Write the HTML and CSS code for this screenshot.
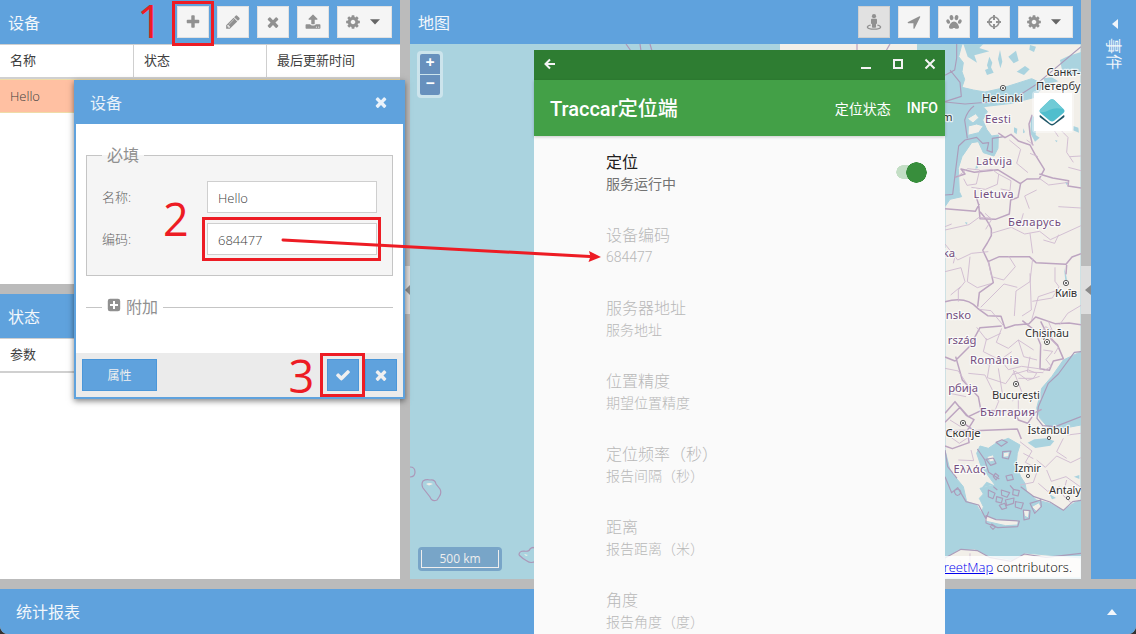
FILE: index.html
```
<!DOCTYPE html>
<html lang="zh-CN">
<head>
<meta charset="utf-8">
<title>Traccar</title>
<link rel="stylesheet" href="styles.css">
</head>
<body>
<svg class="defs" width="0" height="0">
  <symbol id="plus" viewBox="0 0 1792 1792"><path d="M1600 736v192q0 40-28 68t-68 28h-416v416q0 40-28 68t-68 28h-192q-40 0-68-28t-28-68v-416h-416q-40 0-68-28t-28-68v-192q0-40 28-68t68-28h416v-416q0-40 28-68t68-28h192q40 0 68 28t28 68v416h416q40 0 68 28t28 68z"/></symbol>
  <symbol id="times" viewBox="0 0 1792 1792"><path d="M1490 1322q0 40-28 68l-136 136q-28 28-68 28t-68-28l-294-294-294 294q-28 28-68 28t-68-28l-136-136q-28-28-28-68t28-68l294-294-294-294q-28-28-28-68t28-68l136-136q28-28 68-28t68 28l294 294 294-294q28-28 68-28t68 28l136 136q28 28 28 68t-28 68l-294 294 294 294q28 28 28 68z"/></symbol>
  <symbol id="pencil" viewBox="0 0 1792 1792"><path d="M491 1536l91-91-235-235-91 91v107h128v128h107zm523-928q0-22-22-22-10 0-17 7l-542 542q-7 7-7 17 0 22 22 22 10 0 17-7l542-542q7-7 7-17zm-54-192l416 416-832 832h-416v-416zm683 96q0 53-37 90l-166 166-416-416 166-165q36-38 90-38 53 0 91 38l235 234q37 39 37 91z"/></symbol>
  <symbol id="upload" viewBox="0 0 1792 1792"><path d="M1344 1472q0-26-19-45t-45-19-45 19-19 45 19 45 45 19 45-19 19-45zm256 0q0-26-19-45t-45-19-45 19-19 45 19 45 45 19 45-19 19-45zm128-224v320q0 40-28 68t-68 28h-1472q-40 0-68-28t-28-68v-320q0-40 28-68t68-28h427q21 56 70.5 92t110.5 36h256q61 0 110.5-36t70.5-92h427q40 0 68 28t28 68zm-325-648q-17 40-59 40h-256v448q0 26-19 45t-45 19h-256q-26 0-45-19t-19-45v-448h-256q-42 0-59-40-17-39 14-69l448-448q18-19 45-19t45 19l448 448q31 30 14 69z"/></symbol>
  <symbol id="cog" viewBox="0 0 1792 1792"><path d="M1152 896q0-106-75-181t-181-75-181 75-75 181 75 181 181 75 181-75 75-181zm512-109v222q0 12-8 23t-20 13l-185 28q-19 54-39 91 35 50 107 138 10 12 10 25t-9 23q-27 37-99 108t-94 71q-12 0-26-9l-138-108q-44 23-91 38-16 136-29 186-7 28-36 28h-222q-14 0-24.5-8.5t-11.5-21.5l-28-184q-49-16-90-37l-141 107q-10 9-25 9-14 0-25-11-126-114-165-168-7-10-7-23 0-12 8-23 15-21 51-66.5t54-70.5q-27-50-41-99l-183-27q-13-2-21-12.5t-8-23.5v-222q0-12 8-23t19-13l186-28q14-46 39-92-40-57-107-138-10-12-10-24 0-10 9-23 26-36 98.5-107.5t94.5-71.5q13 0 26 10l138 107q44-23 91-38 16-136 29-186 7-28 36-28h222q14 0 24.5 8.5t11.5 21.5l28 184q49 16 90 37l142-107q9-9 24-9 13 0 25 10 129 119 165 170 7 8 7 22 0 12-8 23-15 21-51 66.5t-54 70.5q26 50 41 98l183 28q13 2 21 12.5t8 23.5z"/></symbol>
  <symbol id="arrow" viewBox="0 0 1792 1792"><path d="M1593 349l-640 1280q-17 35-57 35-5 0-15-2-22-5-35.5-22.5t-13.5-39.5v-576h-576q-22 0-39.5-13.5t-22.5-35.5 4-42 29-30l1280-640q13-7 29-7 27 0 45 19 15 14 18.5 34.5t-6.5 39.5z"/></symbol>
  <symbol id="check" viewBox="0 0 1792 1792"><path d="M1671 566q0 40-28 68l-724 724-136 136q-28 28-68 28t-68-28l-136-136-362-362q-28-28-28-68t28-68l136-136q28-28 68-28t68 28l294 295 656-657q28-28 68-28t68 28l136 136q28 28 28 68z"/></symbol>
  <symbol id="street" viewBox="0 0 16 16"><circle cx="8" cy="2.2" r="2.1"/><path d="M6 4.8h4q1 0 1 1v3.400q0 .8-1 .8v3q0 .8-.8.8H6.800q-.8 0-.8-.8v-3q-1 0-1-.8V5.800q0-1 1-1z"/><path d="M4.600 11.200C-.5 12 .3 15.200 8 15.200s8.500-3.200 3.400-4" fill="none" stroke="currentColor" stroke-width="1.300"/></symbol>
  <symbol id="paw" viewBox="0 0 16 16"><ellipse cx="5.500" cy="3.600" rx="1.900" ry="2.600" transform="rotate(-12 5.500 3.600)"/><ellipse cx="10.500" cy="3.600" rx="1.900" ry="2.600" transform="rotate(12 10.500 3.600)"/><ellipse cx="2.200" cy="7.600" rx="1.700" ry="2.300" transform="rotate(-25 2.200 7.600)"/><ellipse cx="13.800" cy="7.600" rx="1.700" ry="2.300" transform="rotate(25 13.800 7.600)"/><path d="M8 7.400c2.500 0 5 3.700 5 5.500 0 1.500-1.200 1.900-2.500 1.900-1 0-1.600-.8-2.500-.8s-1.500.8-2.500.8C4.200 14.800 3 14.400 3 12.900c0-1.800 2.500-5.500 5-5.500z"/></symbol>
  <symbol id="cross" viewBox="0 0 16 16"><circle cx="8" cy="8" r="5" fill="none" stroke="currentColor" stroke-width="1.600"/><path d="M7 1h2v5H7zM7 10h2v5H7zM1 7h5v2H1zM10 7h5v2h-5z"/></symbol>
  <symbol id="plusbox" viewBox="0 0 14 14"><path fill-rule="evenodd" d="M3 .8h8A2.200 2.200 0 0 1 13.200 3v8a2.200 2.200 0 0 1-2.200 2.200H3A2.200 2.200 0 0 1 .8 11V3A2.200 2.200 0 0 1 3 .8zM6 3v3H3v2h3v3h2V8h3V6H8V3z"/></symbol>
  <symbol id="down" viewBox="0 0 10 6"><path d="M0 .2h10L5 5.600z"/></symbol>
</svg>
<div class="app">
  <div class="main">
    <div class="left">
      <section class="devices">
        <header class="bar"><span>设备</span>
          <div class="tools">
            <button class="tool"><svg><use href="#plus"/></svg></button>
            <button class="tool"><svg><use href="#pencil"/></svg></button>
            <button class="tool"><svg><use href="#times"/></svg></button>
            <button class="tool"><svg><use href="#upload"/></svg></button>
            <button class="tool wide"><svg><use href="#cog"/></svg><svg class="caret"><use href="#down"/></svg></button>
          </div>
        </header>
        <div class="thead"><span>名称</span><span>状态</span><span>最后更新时间</span></div>
        <div class="row">Hello</div>
      </section>
      <section class="state">
        <header class="bar"><span>状态</span></header>
        <div class="thead single"><span>参数</span></div>
      </section>
    </div>
    <div class="split"></div>
    <section class="mappane">
      <header class="bar"><span>地图</span>
        <div class="tools">
          <button class="tool on"><svg><use href="#street"/></svg></button>
          <button class="tool"><svg><use href="#arrow"/></svg></button>
          <button class="tool"><svg><use href="#paw"/></svg></button>
          <button class="tool"><svg><use href="#cross"/></svg></button>
          <button class="tool wide"><svg><use href="#cog"/></svg><svg class="caret"><use href="#down"/></svg></button>
        </div>
      </header>
      <div class="map">
        <svg class="tiles" viewBox="410 44 671 535">
          <rect x="410" y="44" width="671" height="535" fill="#aad3df"/>
          <g fill="none" stroke="#ac97b8" stroke-width="1.200">
            <path d="M410 467q5 0 5 5t-5 5M423 481q3-2 7-1 5-1 6 4l4 5q2 4-1 8l-2 3q-5 2-7-3l-7-9q-2-4 0-7zM519 555q0-4 5-4 5 1 6-2 3-3 6 0M519 555q4 4 8 6 4 3 9 0M626 44l5 7M650 44l2 7M640 44l1 7"/>
          </g>
          <path d="M426 484q3-2 7 0l-4 1.500zM524 554l4 1-2 1z" fill="#f2efe9"/>
          <path d="M780 44h137v8H780z" fill="#f2efe9"/>
          <path d="M857 44v7M890 44l-4 7" fill="none" stroke="#bda5c1" stroke-width="1.300"/>
          <g transform="translate(930 40) scale(.33333)">
            <path class="land" d="M96 12L86 50 100 68 96 95 104 118 96 142 130 150 165 156 210 146 255 132 305 116 335 130 330 150 315 172 245 190 195 196 160 200 172 215 158 240 170 268 185 288 205 285 204 325 192 348 160 338 145 305 125 308 96 350 85 385 88 455 95 470 60 478 45 500V1230L60 1290 75 1310 100 1340 110 1385 140 1395 155 1420 160 1400 148 1375 160 1362 150 1345 195 1335 180 1315 152 1275 140 1240 150 1218 175 1225 200 1208 235 1195 270 1215 262 1240 258 1275 272 1310 285 1330 290 1355 320 1380 360 1390 400 1412 430 1390 453 1380V1155L400 1165 355 1163 330 1135 320 1105 335 1045 365 1010 400 960 453 935V12z"/>
            <path class="land" d="M112 236l25-15 10 12-18 16zM115 258l25-6 20 6-14 20-32 8zM165 1425l12 4 20 8 68 4-2 14-36 2-62-14zM45 1553l40-24 50-2 40 20 70 12 40-20 168 15v60H45zM170 1250l20-6 5 18-15 4zM220 1238l18-3-2 15-16 2zM280 1410l18 2-3 22-12-6zM305 1400l22-12 8 16-16 10z"/>
            <g fill="#aad3df">
              <path d="M100 12h60l-12 12 30 10-45 12 8 22-28-18zM178 50l9 18-8 28-8-20zM210 30l7 35-6 20-7-28zM235 50l23-18 8 30-15 8zM165 90l18-8 8 16-20 7zM260 95l25-17 14 10-17 17zM300 15l18 5-6 16-14-7zM390 60l25-12 38-12v65l-35 4-22-14zM303 225l17 10-3 50 12 8-14 12-14-25zM340 115l25-3 20 12-38 10zM430 258l15 5 2 15-18-7zM140 370l4 14-8 2zM280 265l5 12-6 3zM252 262l10 4-2 17-8-6zM402 684l7 24 3 20-5 3z"/>
              <path d="M293 1208l20-10 35-3 25 8-12 14-45 7zM405 425l10 4-5 6zM105 546l8 2-4 6zM375 300l8 2-4 5zM170 1325l20 9-35 9zM432 1310l16-5v12zM358 1362l20 12-12 4z"/>
            </g>
            <g class="sea-lines">
              <path d="M80 12v42l-6 36-29 16M60 90l30 37 4 42-49 16M45 186l60 6 75-6 75-12 60-38 138-116M132 198q-20 14-28 42l8 55M105 300l-19 18-10 80-8 65-23 2M105 300l35-8 18 18 18-2-5 23 16 6V295l35-5M453 935l-20 2-48 65-30 28-30 70-4 35 17 22 38 3 77-30M45 1310l20 48 18-15 25 42 38 10 22 42 8-22M45 1230l8 50 28 35M142 1227l22 32 12 38 32 20M168 1427l30 12 70 4-5 17-60 3-35-14zM45 1554l48-26 50 4 35 20 65 12 40-22 65 10 105-12M272 1340l40 30 48 16 40 25 28-26 25-4M75 1350q14-8 18 8-12 18-20-2zM185 1452l12 8-8 8-8-8zM280 1410l20 2-2 24-16 4zM300 1390l32-10 2 20-20 20z"/>
              <path d="M168 1258l22-4 8 16-16 6zM218 1235l25-2-8 24-18-4zM198 1207l18-8 16 8-18 12zM196 1300l10 8-8 12-8-10zM228 1308l18-4 4 14-18 4zM175 1350l20 10-6 16-14-6zM200 1370l18 5-4 14-16-4zM226 1380l26-6-2 16-20 6zM214 1350l25 8-8 14-16-6zM250 1348l18 4-4 16-16-4zM256 1385l24 4-6 18-18-6zM190 1340l12 10M240 1336l12 14M208 1396l16-6 6 14-14 4z"/>
            </g>
            <g class="borders wide">
              <path d="M308 316l-8-34-3-30 10-28M75 412l30-10-12-15 40 10 70-8 68 42 20-14 37-1 15-28-28-45-15-28-35-12-22-20-18 10-20-14M328 402l40 12 48 8-2 16 39 6M272 430l-8 42-22 8-4 42-42 16-46-2-4-42-12-38M148 492l-12 22-91-8M150 515q25 28 34 52v20l-12 22-14 22M158 630l18 38 14 60-42 30-5 42M174 665l34-15h90l20 18 90 5 18-22 27-10M410 675l-2 28M45 785q65-18 98 20l30 22 40 2 12 36 30-10 42-4 20-20 58 20 42-2 36 5M215 858l-65 5-30 55-45 45-30-12M277 842l38 30 17 42-2 72 28 5 12-28 30-7-18-42-30-30-20-40M77 950l20 70 48 50 8 42-38 18-25-28-45 45M150 1110l105 5 10 25 28 10 22-32 20-10M102 1150l30 22 130-5 12 30M45 1120l30-35 35 42 22 12-20 32-67 2M115 1180l2 28-50 18-22-8"/>
            </g>
            <g class="borders">
              <path d="M85 408l28-22 36 4-10 42-28 4-10-20M148 392l38-4 20 15-4 30-36 15-42-6M205 402l38 20-3 30-28-5M45 570l72-16 30-22 35 2M45 612l38 48 42-20 50-5M184 580l60-18 40 20 45-8 32 25 92-42M280 520l-10 36M120 650l-8 75 30 18 40-12M92 740l-30 25M175 665l10 45 36 10 35-40-20-32M308 655l-8 70-42 28-5 75M262 742l-40-10-70 70M300 700l4 110-28 18M375 682v42l12 16-20 34-60 10M385 750l-60 20-20 70M455 795l-42 25-24 34M45 695l48-12 12 42-20 25v35M45 650l30 0-5 20M148 808l35 4 40 48M140 862l30 38 42-20M215 865l-16 42 36 18 30-25 46 30M170 895l-10 40 50 25 35-25M265 900l16 50 40 10M130 965l50 10 30-18 25 32 40-10 58 8M180 965l-8 48 55 18 28-38 38 28 36-12M115 1000l50 5 32 65M205 985l12 75M250 990l25 65-28 28M300 950l-8 46 48 2M265 1015h45l10-15-25-10-48 14M345 905l-18-20 20-25 32 20-18 18 24 24-12 20M340 930l28 4-20 25 16 20-24 14M355 844l15 35M45 985l40 8 25 38M60 1060l48 10M190 1060l16 24-12 30M265 1065v45M290 300l22 16M238 300l34 28-12 42 34 28M300 340l24 10M165 520l20 18-18 30M328 415l28 20 60-8M320 450l-36 18 14 38M385 500l68 4M340 600l34 10 12-26M300 580l8 60"/>
              <path d="M270 1205l36 28-20 34 38 20-14 40-40 8M320 1260l26 22 34-34 42 20 31-15M350 1290l14 34 44-14 45 32M325 1330l28 24 36-14M400 1195l-20 40 30 20M280 1240l30 16M60 1140l32 20M60 1190l28 20 30-20M85 1260l46 2-8-32M410 1320l-12 45 26 24M453 1180l-40 5-22-18M45 560l20-8M400 200l-18 40 10 30 22 22-4 45 20 30M420 350l33-2M415 382l38 10M100 1600l-10-40M120 1600v-60M385 290l-12-18"/>
            </g>
          </g>
          <g class="dots">
            <circle cx="1003" cy="88" r="2.600"/><circle cx="1066" cy="283" r="2.600"/><circle cx="1047" cy="342" r="2.600"/><circle cx="1016" cy="384" r="2.600"/><circle cx="963" cy="423" r="2.600"/>
            <circle cx="1049" cy="438" r="1.600"/><circle cx="1028" cy="476" r="1.600"/><circle cx="1068" cy="498" r="1.600"/>
          </g>
          <g class="dotcore"><circle cx="1003" cy="88" r="1"/><circle cx="1066" cy="283" r="1"/><circle cx="1047" cy="342" r="1"/><circle cx="1016" cy="384" r="1"/><circle cx="963" cy="423" r="1"/></g>
          <g class="city">
            <text x="1046.500" y="76" textLength="34">Санкт-</text><text x="1036" y="89.500" textLength="44.500">Петербу</text>
            <text x="982" y="101.500" textLength="41">Helsinki</text><text x="942" y="121">m</text>
            <text x="1055" y="297" textLength="22">Київ</text>
            <text x="1025" y="336.500" textLength="44">Chișinău</text><text x="992" y="399" textLength="48">București</text>
            <text x="1027.500" y="433.500" textLength="42">İstanbul</text><text x="945.500" y="437" textLength="35">Скопје</text>
            <text x="1014.500" y="472" textLength="26.500">İzmir</text><text x="1049" y="493.500" textLength="32">Antaly</text>
          </g>
          <g class="country">
            <text x="985" y="123" textLength="26">Eesti</text><text x="976" y="164.500" textLength="36">Latvija</text><text x="973.500" y="198" textLength="40">Lietuva</text>
            <text x="1008" y="225.500" textLength="53">Беларусь</text><text x="955" y="257" text-anchor="end">ka</text>
            <text x="971" y="318.500" text-anchor="end">nsko</text><text x="976.500" y="344" text-anchor="end">rszág</text>
            <text x="970" y="363.500" textLength="49">România</text><text x="978" y="392" text-anchor="end">рбија</text>
            <text x="980" y="415.500" textLength="55">България</text><text x="953.500" y="473" textLength="32">Ελλάς</text>
          </g>
        </svg>
        <div class="zoomctl"><button>+</button><button>−</button></div>
        <div class="scale"><div>500 km</div></div>
        <div class="layers"><svg viewBox="0 0 32 32"><path d="M3.500 20q0-1 1.500-1h22q1.500 0 1.500 1 0 1-1 1.800L18 28.800q-2 1.400-4 0L4.500 21.800q-1-.8-1-1.800z" fill="#1d5465"/><path d="M3.500 17.500q0-1 1.500-1h22q1.500 0 1.500 1 0 1-1 1.800L18 27.200q-2 1.400-4 0L4.500 19.300q-1-.8-1-1.800z" fill="#fff"/><path d="M13.800 4q2.200-1.600 4.400 0l9.300 9q2 2 0 4l-9.300 7.800q-2.200 1.600-4.400 0l-9.300-7.800q-2-2 0-4z" fill="#50becd"/><path d="M13.800 4q2.200-1.600 4.400 0l9 9q-8-2-14 1-5 3-9 2-1-1.500.3-3z" fill="#70cbd6"/></svg></div>
        <div class="credit">© <a>OpenStreetMap</a> contributors.</div>
      </div>
    </section>
    <div class="split"><i class="grip"></i></div>
    <aside class="events"><svg viewBox="0 0 6 10"><path d="M6 0v10L0 5z"/></svg><span>事件</span></aside>
  </div>
  <footer class="bar reports"><span>统计报表</span><svg viewBox="0 0 10 6"><path d="M0 6h10L5 0z"/></svg></footer>

  <i class="leftgrip"></i>
  <div class="dialog">
    <header class="bar"><span>设备</span><svg><use href="#times"/></svg></header>
    <div class="form">
      <fieldset class="required"><legend>必填</legend>
        <label><span>名称:</span><b>Hello</b></label>
        <label><span>编码:</span><b>684477</b></label>
      </fieldset>
      <fieldset class="extra"><legend><svg><use href="#plusbox"/></svg>附加</legend></fieldset>
    </div>
    <div class="actions"><button class="attr">属性</button><button class="ok"><svg><use href="#check"/></svg></button><button><svg><use href="#times"/></svg></button></div>
  </div>

  <div class="phone">
    <div class="titlebar">
      <svg viewBox="0 0 12 12"><path d="M11 6H2M6 1.500L1.500 6 6 10.500"/></svg>
      <svg class="end" viewBox="0 0 12 12"><path d="M1 10h10"/></svg>
      <svg viewBox="0 0 12 12"><path d="M2 2h8v8H2z"/></svg>
      <svg viewBox="0 0 12 12"><path d="M1.500 1.500l9 9M10.500 1.500l-9 9"/></svg>
    </div>
    <div class="appbar"><h1>Traccar定位端</h1><span>定位状态</span><strong>INFO</strong></div>
    <ul>
      <li class="live"><p>定位<small>服务运行中</small></p><i class="switch"></i></li>
      <li><p>设备编码<small>684477</small></p></li>
      <li><p>服务器地址<small>服务地址</small></p></li>
      <li><p>位置精度<small>期望位置精度</small></p></li>
      <li><p>定位频率（秒）<small>报告间隔（秒）</small></p></li>
      <li><p>距离<small>报告距离（米）</small></p></li>
      <li><p>角度<small>报告角度（度）</small></p></li>
    </ul>
  </div>

  <svg class="notes" viewBox="0 0 1136 634">
    <g fill="none" stroke="#ed1c24" stroke-width="3"><path d="M173.500 2.500h39v42h-39zM203.500 218.500h176v41h-176zM321.500 354.500h42v41h-42z"/><path d="M283 240l307 16.500" stroke-linecap="round"/></g>
    <path d="M601 257l-12.500 5 2-5.500-1.500-5.500z" fill="#ed1c24"/>
    <text x="137" y="38">1</text><text x="163" y="236">2</text><text x="288.500" y="393">3</text>
  </svg>
</div>
</body>
</html>
```
FILE: styles.css
```
* { box-sizing: border-box; }
body { margin: 0; background: #333; font: 300 13px "Open Sans", "Noto Sans CJK SC", sans-serif; color: #404040; }
.defs { position: absolute; }
svg { display: block; fill: currentColor; }
button { font: inherit; padding: 0; margin: 0; border: 0; }
p, h1, ul { margin: 0; padding: 0; }
.app { position: relative; width: 1136px; height: 634px; overflow: hidden; background: #bbb; display: flex; flex-direction: column; gap: 10px; border-radius: 0 0 8px 8px; }
.main { display: flex; height: 579px; }
.left { width: 400px; display: flex; flex-direction: column; gap: 10px; }
.devices { height: 284px; background: #fff; }
.state { flex: 1; background: #fff; }
.bar { height: 44px; background: #5fa2dd; color: #f3f7fb; font-size: 16px; font-weight: 400; display: flex; align-items: center; justify-content: space-between; padding: 0 8px; }
.bar > span { margin-top: -1px; }
.tools { display: flex; gap: 8px; }
.tool { width: 32px; height: 32px; background: #f5f5f5; border: 1px solid #e1e1e1; color: #919191; display: flex; align-items: center; justify-content: center; }
.tool svg { width: 16px; height: 16px; }
.tool.wide { width: 55px; gap: 9px; padding-right: 4px; }
.tool.on { background: #e1e1e1; border-color: #d0d0d0; }
.tool .caret { width: 10px; height: 6px; color: #666; }
.thead { height: 35px; display: grid; grid-template-columns: 134px 133px 1fr; border-top: 1px solid #cfcfcf; border-bottom: 2px solid #d0d0d0; font-weight: 400; }
.thead span { padding-left: 10px; line-height: 31px; border-right: 1px solid #cfcfcf; }
.thead span:last-child { border-right: 0; }
.thead.single { grid-template-columns: 1fr; }
.row { height: 34px; padding-left: 10px; line-height: 33px; background: #ffc0a2; border: solid #efdca8; border-width: 1px 0; }
.split { width: 10px; padding-top: 266px; }
.grip, .leftgrip { display: block; width: 10px; height: 48px; background: #dedede; }
.leftgrip { position: absolute; left: 405px; top: 266px; width: 5px; }
.grip::after, .leftgrip::after { content: ""; display: block; width: 6px; height: 10px; background: #8b8b8b; clip-path: polygon(100% 0, 100% 100%, 0 50%); transform: translate(4px, 19px); }
.leftgrip::after { width: 5px; transform: translate(0, 19px); }
.mappane { width: 671px; }
.map { position: relative; height: 535px; overflow: hidden; }
.tiles { width: 671px; height: 535px; }
.land { fill: #f2efe9; stroke: #aad3df; stroke-width: 3; }
.sea-lines, .borders { fill: none; stroke: #ab9cba; stroke-width: 3.5; stroke-linejoin: round; }
.borders { stroke: #cfbad0; stroke-width: 2.7; }
.borders.wide { stroke: #bda5c1; stroke-width: 4.5; }
.dots { fill: #fff; stroke: #555; }
.dotcore { fill: #444; }
.city, .country { font: 11.3px "Noto Sans", sans-serif; fill: #333; stroke: rgba(255,255,255,.7); stroke-width: 2.5px; paint-order: stroke; stroke-linejoin: round; }
.country { fill: #734e80; }
.zoomctl { position: absolute; left: 7px; top: 7px; width: 26px; padding: 3px; border-radius: 4px; background: rgba(255,255,255,.4); display: grid; gap: 1px; }
.zoomctl button { height: 20px; background: #6790bd; color: #fff; font: bold 16px/15px "Open Sans"; border-radius: 2px 2px 0 0; padding-bottom: 3px; }
.zoomctl button + button { border-radius: 0 0 2px 2px; }
.scale { position: absolute; left: 8px; top: 503px; width: 84px; height: 24px; background: #78a5c8; border-radius: 4px; padding: 3px; }
.scale div { border: 1px solid #eee; border-top: 0; height: 18px; text-align: center; color: #eee; font: 12px/17px "Open Sans"; }
.layers { position: absolute; left: 622px; top: 47px; width: 42px; height: 42px; padding: 2px; border-radius: 4px; background: rgba(255,255,255,.4); }
.layers svg { width: 38px; height: 38px; padding: 3px 4px 3px 2px; background: #fff; }
.credit { position: absolute; right: 0; bottom: 0; height: 23px; padding: 0 9px 0 6px; background: rgba(255,255,255,.8); color: #000; font-size: 13px; line-height: 22px; white-space: nowrap; }
.credit a { color: #00e; text-decoration: underline; }
.events { width: 45px; background: #5fa2dd; color: #f0f5fa; display: flex; flex-direction: column; align-items: center; padding-top: 19px; font-size: 16px; font-weight: 400; }
.events svg { width: 6px; height: 10px; margin-left: 2px; }
.events span { writing-mode: vertical-rl; text-orientation: sideways; padding: 9px 0 0 2px; }
.reports { height: 45px; padding: 0 19px 0 16px; }
.reports svg { width: 10px; height: 6px; }
.dialog { position: absolute; left: 74px; top: 80px; width: 331px; height: 319px; background: #fff; border: 2px solid #5fa2dd; border-top: 0; box-shadow: 0 2px 6px rgba(0,0,0,.5); display: flex; flex-direction: column; }
.dialog .bar { padding: 0 14px; color: #eaf2fa; }
.dialog svg { width: 16px; height: 16px; }
.form { flex: 1; padding: 19px 10px 0; }
fieldset { min-width: 0; margin: 0; border: 1px solid #c5c5c5; }
legend { padding: 0 5px; font-size: 16px; line-height: 24px; color: #909090; font-weight: 400; display: flex; }
.required { height: 133px; padding: 14px 15px 0 10px; background: #f5f5f5; }
.required label { display: flex; height: 32px; margin-bottom: 10px; line-height: 32px; padding-left: 5px; color: #666; }
.required span { width: 105px; }
.required b { flex: 1; padding-left: 10px; border: 1px solid #cfcfcf; background: #fff; font-weight: 300; line-height: 32px; color: #404040; }
.extra { margin-top: 19px; padding: 0 10px; border-width: 1px 0 0; }
.required legend { margin-left: 5px; }
.extra legend { margin-left: 6px; }
.extra legend svg { width: 14px; height: 14px; margin: 3px 5px 0 0; }
.actions { height: 44px; padding: 0 6px; background: #ebebeb; display: flex; align-items: center; gap: 6px; }
.actions button { width: 32px; height: 32px; background: #5fa2dd; border: 1px solid #4b97d9; color: #f0f0f0; display: flex; align-items: center; justify-content: center; }
.actions .attr { width: 75px; font-size: 12px; font-weight: 400; padding-bottom: 1px; }
.actions .ok { margin-left: auto; }
.phone { position: absolute; left: 534px; top: 50px; width: 411px; height: 584px; background: #fafafa; color: #fff; font: 400 14px Roboto, "Noto Sans CJK SC", sans-serif; }
.titlebar { height: 30px; background: #2e7d32; display: flex; align-items: center; gap: 20px; padding: 0 9px 2px 10px; }
.titlebar svg { width: 12px; height: 12px; fill: none; stroke: #f4f4f4; stroke-width: 2; }
.titlebar .end { margin-left: auto; }
.appbar { height: 56px; background: #43a047; display: flex; align-items: center; padding: 0 7px 1px 16px; box-shadow: 0 1px 3px rgba(0,0,0,.2); }
.appbar h1 { flex: 1; font: 500 20px Roboto, "Noto Sans CJK SC", sans-serif; }
.appbar strong { font-weight: 500; margin-left: 16px; }
.phone ul { list-style: none; }
.phone li { height: 73px; padding: 0 18px 0 72px; display: flex; align-items: center; justify-content: space-between; color: #b8b8b8; font-size: 16px; line-height: 22px; font-weight: 300; }
.phone p { padding-top: 1px; }
.phone small { display: block; font-size: 14px; line-height: 20px; }
.phone li.live { color: #202020; font-weight: 400; }
.live small { color: #737373; }
.switch { width: 31px; height: 21px; background: radial-gradient(circle at 20.5px 10.5px, #388e3c 10px, transparent 10.5px), linear-gradient(#c3dec5, #c3dec5) 7px 3px / 14px 14px no-repeat, radial-gradient(circle at 7px 10px, #c3dec5 6.5px, transparent 7px); border-radius: 10px; }
.notes { position: absolute; left: 0; top: 0; width: 1136px; height: 634px; pointer-events: none; }
.notes text { font: 400 45px "Open Sans"; fill: #ed1c24; }
```
